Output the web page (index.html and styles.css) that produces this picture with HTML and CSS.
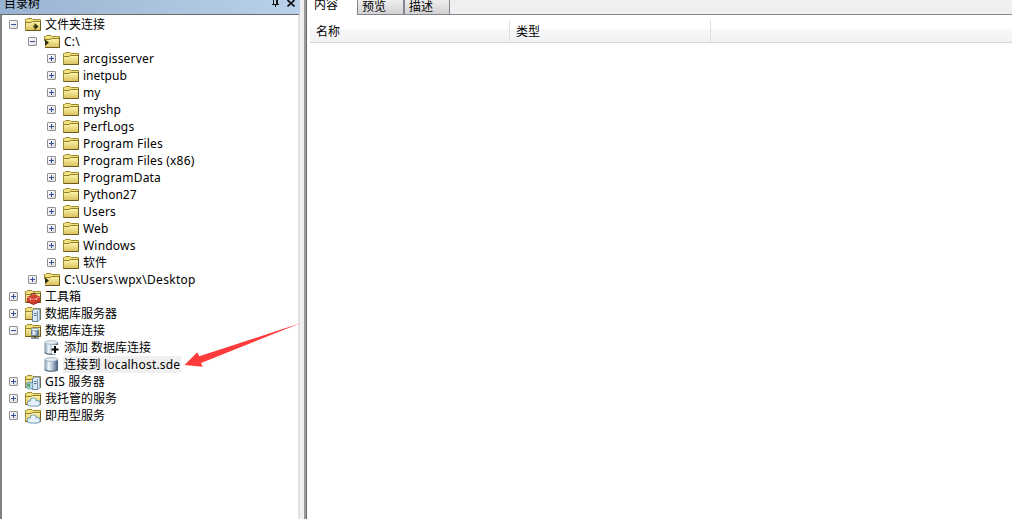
FILE: index.html
```html
<!DOCTYPE html>
<html lang="zh-CN">
<head>
<meta charset="utf-8">
<title>目录树</title>
<link rel="stylesheet" href="styles.css">
</head>
<body>
<svg class="defs" aria-hidden="true">
  <defs>
    <linearGradient id="gold" x1="0" y1="0" x2="0" y2="1"><stop offset="0" stop-color="#fbf3a6"/><stop offset="1" stop-color="#d9bf5c"/></linearGradient>
    <linearGradient id="steel"><stop offset="0" stop-color="#7893ae"/><stop offset=".3" stop-color="#f1f6fa"/><stop offset=".55" stop-color="#b7c9d9"/><stop offset="1" stop-color="#415d7a"/></linearGradient>
    <symbol id="folder" viewBox="0 0 16 16">
      <path d="M.5 13.500v-11h1l1-1h4.500l1 1h7.500v11z" fill="#f0e07e" stroke="#a08a30"/>
      <path d="M1 6h5l1.500-1H15v8.500H1z" fill="url(#gold)"/>
      <path d="M1 5.500h5l1.500-1H15" fill="none" stroke="#94802c"/>
      <path d="M.5 13.500h15V4" fill="none" stroke="#6d5c1c"/>
    </symbol>
    <symbol id="folder-link" viewBox="0 0 16 16"><use href="#folder"/><path d="M9.500 6l4 3.500-4 3.500z" fill="#2d2c12"/><path d="M8 8.500h2v2H8z" fill="#6e6325"/></symbol>
    <symbol id="folder-open" viewBox="0 0 16 16"><use href="#folder"/><path d="M0 7h1v7H0z" fill="#fff"/><path d="M1 5.500L5 8.500 1 12z" fill="#2d2c12"/></symbol>
    <symbol id="toolbox" viewBox="0 0 16 16"><use href="#folder"/><path d="M2 8l7-3 6 2.500v5L8.500 15.500 2 12.500z" fill="#cf3e2e"/><path d="M2 8l6.500 2.500L15 7.500" stroke="#ee8f7b" fill="none"/><path d="M2 12.500l6.500 3 6.500-3" stroke="#952318" fill="none"/><path d="M6 6.500V5l3.500-1L11 5.500" stroke="#6b2721" fill="none"/><path d="M5 10h1v1.500H5zM11 9.500h1V11h-1z" fill="#f4d6cc"/></symbol>
    <symbol id="server" viewBox="0 0 16 16"><use href="#folder"/><path d="M7.500 4.500l2-1.500h5.500v10.500l-2 2H7.500z" fill="#dce8f1" stroke="#66839b"/><path d="M12.500 5v10" stroke="#7d9ab0"/><path d="M9 7.500h2.500M9 9.500h2.500" stroke="#56748e"/></symbol>
    <symbol id="gis" viewBox="0 0 16 16"><use href="#server"/><circle cx="4.500" cy="11.500" r="3.500" fill="#b9dcf0" stroke="#6b9dba"/><path d="M2 10l2.500-1 1 2-1 3-2.500-2z" fill="#5fa763"/></symbol>
    <symbol id="database-folder" viewBox="0 0 16 16"><use href="#folder"/><path d="M6.500 6.500h7v6h-7z" fill="url(#steel)" stroke="#5b7890" stroke-width=".8"/><ellipse cx="10" cy="6.500" rx="3.500" ry="1.300" fill="#eff7fb" stroke="#66839b" stroke-width=".7"/><path d="M10 13v2M6 15h8" stroke="#25394b"/></symbol>
    <symbol id="cloud" viewBox="0 0 16 16">
      <use href="#folder"/>
      <g fill="#e6f3fb" stroke="#6e9bb9" stroke-width="1.400"><circle cx="5" cy="12.300" r="2.300"/><circle cx="8.300" cy="9.800" r="2.700"/><circle cx="12.300" cy="12.200" r="2.400"/></g>
      <path d="M5 14.900h7.500" stroke="#6e9bb9" stroke-width="1.200"/>
      <g fill="#e6f3fb"><circle cx="5" cy="12.300" r="2.100"/><circle cx="8.300" cy="9.800" r="2.500"/><circle cx="12.300" cy="12.200" r="2.200"/><path d="M5 11h7v3.400H5z"/></g>
    </symbol>
    <symbol id="database" viewBox="0 0 16 16"><path d="M.5 2.500v9.500c0 2.500 13.500 2.500 13.500 0V2.500z" fill="url(#steel)"/><path d="M.5 12.500c1 2.300 12.500 2.300 13.500 0" fill="none" stroke="#2f4357"/><ellipse cx="7.250" cy="2.500" rx="6.400" ry="1.800" fill="#e8f0f6" stroke="#8fa6b9" stroke-width=".8"/></symbol>
    <symbol id="database-add" viewBox="0 0 16 16"><use href="#database"/><path d="M8 5h7v9H8z" fill="#fff"/><path d="M11 6v7M7.500 9.500h7" stroke="#080808" stroke-width="2"/></symbol>
  </defs>
</svg>
<div class="app">
  <section class="catalog">
    <header class="catalog-title"><span class="caption">目录树</span>
      <svg class="pin" viewBox="0 0 9 8"><path d="M2.500 0v4M5.500 0v4M6.500 0v4M1 4.500h7M4.500 5v2" stroke="#111" fill="none"/></svg>
      <svg class="close" viewBox="0 0 8 8"><path d="M.5 0l7 6.500M7.500 0l-7 6.500" stroke="#111" stroke-width="1.700"/></svg>
    </header>
    <div class="tree">
      <div class="row"><i class="toggle open"></i><svg class="icon"><use href="#folder-link"/></svg><span class="label">文件夹连接</span></div>
      <div class="row l1"><i class="toggle open"></i><svg class="icon"><use href="#folder-open"/></svg><span class="label latin">C:\</span></div>
      <div class="row l2"><i class="toggle"></i><svg class="icon"><use href="#folder"/></svg><span class="label latin">arcgisserver</span></div>
      <div class="row l2"><i class="toggle"></i><svg class="icon"><use href="#folder"/></svg><span class="label">inetpub</span></div>
      <div class="row l2"><i class="toggle"></i><svg class="icon"><use href="#folder"/></svg><span class="label">my</span></div>
      <div class="row l2"><i class="toggle"></i><svg class="icon"><use href="#folder"/></svg><span class="label">myshp</span></div>
      <div class="row l2"><i class="toggle"></i><svg class="icon"><use href="#folder"/></svg><span class="label latin">PerfLogs</span></div>
      <div class="row l2"><i class="toggle"></i><svg class="icon"><use href="#folder"/></svg><span class="label latin">Program Files</span></div>
      <div class="row l2"><i class="toggle"></i><svg class="icon"><use href="#folder"/></svg><span class="label latin">Program Files (x86)</span></div>
      <div class="row l2"><i class="toggle"></i><svg class="icon"><use href="#folder"/></svg><span class="label latin">ProgramData</span></div>
      <div class="row l2"><i class="toggle"></i><svg class="icon"><use href="#folder"/></svg><span class="label">Python27</span></div>
      <div class="row l2"><i class="toggle"></i><svg class="icon"><use href="#folder"/></svg><span class="label latin">Users</span></div>
      <div class="row l2"><i class="toggle"></i><svg class="icon"><use href="#folder"/></svg><span class="label latin">Web</span></div>
      <div class="row l2"><i class="toggle"></i><svg class="icon"><use href="#folder"/></svg><span class="label latin">Windows</span></div>
      <div class="row l2"><i class="toggle"></i><svg class="icon"><use href="#folder"/></svg><span class="label">软件</span></div>
      <div class="row l1"><i class="toggle"></i><svg class="icon"><use href="#folder-open"/></svg><span class="label path">C:\Users\wpx\Desktop</span></div>
      <div class="row"><i class="toggle"></i><svg class="icon"><use href="#toolbox"/></svg><span class="label">工具箱</span></div>
      <div class="row"><i class="toggle"></i><svg class="icon"><use href="#server"/></svg><span class="label">数据库服务器</span></div>
      <div class="row"><i class="toggle open"></i><svg class="icon"><use href="#database-folder"/></svg><span class="label">数据库连接</span></div>
      <div class="row l1"><i class="leaf"></i><svg class="icon"><use href="#database-add"/></svg><span class="label">添加 数据库连接</span></div>
      <div class="row l1"><i class="leaf"></i><svg class="icon"><use href="#database"/></svg><span class="label latin selected">连接到 localhost.sde</span></div>
      <div class="row"><i class="toggle"></i><svg class="icon"><use href="#gis"/></svg><span class="label latin">GIS 服务器</span></div>
      <div class="row"><i class="toggle"></i><svg class="icon"><use href="#cloud"/></svg><span class="label">我托管的服务</span></div>
      <div class="row"><i class="toggle"></i><svg class="icon"><use href="#cloud"/></svg><span class="label">即用型服务</span></div>
    </div>
  </section>
  <div class="splitter"></div>
  <main class="content">
    <nav class="tabs"><span class="tab active">内容</span><span class="tab preview">预览</span><span class="tab">描述</span></nav>
    <div class="columns"><span class="column">名称</span><span class="column">类型</span></div>
  </main>
  <svg class="arrow" viewBox="0 0 122 48"><path d="M121 3L19.300 36.300 17.300 32.300 4.500 45 22.700 46.700 21 43z" fill="#ff3b3b"/></svg>
</div>
</body>
</html>
```
FILE: styles.css
```css
* { box-sizing: border-box; }
body {
  margin: 0;
  overflow: hidden;
  font: 12px/17px "Noto Sans", "Noto Sans CJK SC", sans-serif;
  color: #000;
  background: #fff;
}
.defs { position: absolute; width: 0; height: 0; }
.app { display: flex; position: relative; width: 1012px; height: 519px; }
.catalog { display: flex; flex-direction: column; width: 300px; }
.catalog-title {
  display: flex;
  height: 14px;
  padding: 0 4px;
  background: linear-gradient(90deg, #99b4d1, #b9d1ea);
}
.caption { flex: 1; height: 14px; line-height: 8px; }
.pin { width: 9px; height: 8px; margin-right: 7px; }
.close { width: 8px; height: 8px; margin-right: 1px; }
.tree {
  flex: 1;
  padding-top: 1px;
  border-top: 1px solid #696969;
  border-left: 2px solid #808080;
  border-right: 2px solid #e3e3e3;
}
.row { display: flex; align-items: center; height: 17px; padding-left: 7px; white-space: nowrap; }
.l1 { padding-left: 26px; }
.l2 { padding-left: 45px; }
.toggle, .leaf { flex: none; width: 9px; height: 9px; margin-right: 7px; }
.toggle {
  border: 1px solid #919191;
  border-radius: 1px;
  background:
    linear-gradient(#34509a, #34509a) 1px 3px / 5px 1px no-repeat,
    linear-gradient(#34509a, #34509a) 3px 1px / 1px 5px no-repeat,
    linear-gradient(135deg, #fff, #dcdcdc);
}
.toggle.open {
  background:
    linear-gradient(#34509a, #34509a) 1px 3px / 5px 1px no-repeat,
    linear-gradient(135deg, #fff, #dcdcdc);
}
.icon { flex: none; width: 16px; height: 16px; margin-right: 3px; }
.label { padding: 0 1px; line-height: 17px; height: 17px; }
.latin { letter-spacing: .2px; }
.path { letter-spacing: .3px; }
.selected { background: #f0f0f0; }
.splitter { width: 7px; border-left: 4px solid #f0f0f0; border-right: 1px solid #696969; background: #9b9b9f; }
.content { flex: 1; }
.tabs { display: flex; height: 15px; background: #f0eeee; }
.tabs::after { content: ""; flex: 1; border-bottom: 1px solid #85858f; }
.tab {
  width: 45px;
  height: 15px;
  padding-left: 4px;
  line-height: 13px;
  border-right: 1px solid #85858f;
  border-bottom: 1px solid #85858f;
  background: linear-gradient(#eeeeee, #d2d2d2);
}
.active { width: 51px; padding-left: 7px; line-height: 10px; background: #fff; border-bottom: 0; }
.preview { width: 47px; border-right-width: 2px; }
.columns {
  display: flex;
  height: 23px;
  margin: 5px 0 0 3px;
  border-bottom: 1px solid #d5d5d5;
  background: linear-gradient(#fff 0 9px, #f7f8fa 9px, #f1f2f4);
}
.column { width: 200px; padding-left: 6px; line-height: 23px; border-right: 1px solid #dfe0e2; }
.column + .column { width: 201px; }
.arrow { position: absolute; left: 180px; top: 320px; width: 122px; height: 48px; }
```
